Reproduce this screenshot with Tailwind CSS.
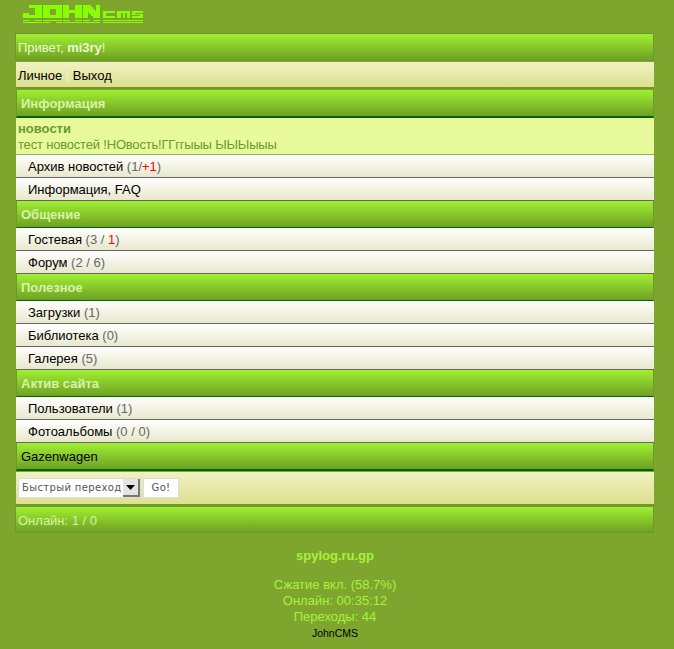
<!DOCTYPE html>
<html><head><meta charset="utf-8"><script src="https://cdn.jsdelivr.net/npm/@tailwindcss/browser@4"></script></head>
<body class="bg-[#7ea52e] font-['Liberation_Sans',Arial,sans-serif] text-[13px] leading-[16px] h-[649px] overflow-hidden">
<div class="pl-[16px] pr-[20px]">
<div class="h-[33px] pl-[7px] pt-[5px]">
<svg width="121" height="19" viewBox="0 0 121 19" fill="#88ff00" shape-rendering="crispEdges">
<path d="M6 0h13v13H0V8h6v2h6V3H6z"/>
<path fill-rule="evenodd" d="M20 0h19v13H20zM27 4v6h6V4z"/>
<path d="M40 0h6v5h6V0h7v13h-7V8h-6v5h-6z"/>
<path d="M60 0h8v2h2v2h2v2h1V0h4v13h-7v-2h-2V9h-2V7h-1v6h-5z"/>
<g>
<rect x="0" y="15" width="7" height="1"/><rect x="11" y="15" width="8" height="1"/><rect x="20" y="15" width="19" height="1"/><rect x="40" y="15" width="7" height="1"/><rect x="52" y="15" width="7" height="1"/><rect x="60" y="15" width="7" height="1"/><rect x="70" y="15" width="7" height="1"/>
<rect x="0" y="17" width="19" height="1"/><rect x="20" y="17" width="7" height="1"/><rect x="33" y="17" width="6" height="1"/><rect x="40" y="17" width="19" height="1"/><rect x="60" y="17" width="17" height="1"/>
</g>
<path fill-rule="evenodd" d="M80 6h12v2h-9v3h9v2H80z"/>
<path d="M94 6h13v7h-3V8h-2v5h-2V8h-2v5h-4z"/>
<path d="M109 6h11v2h-8v1h8v4h-11v-2h8v-1h-8z"/>
<rect x="80" y="15" width="40" height="1"/><rect x="80" y="17" width="40" height="1"/>
</svg>
</div>
<div class="h-[28px] -ml-px border border-[#6f9a2a] bg-gradient-to-b from-[#a0f032] to-[#6fa124] pl-[2px] pt-[6px] text-[#eaf7d0]">Привет, <b>mi3ry</b>!</div>
<div class="h-[27px] mt-[1px] border-b-2 border-[#6f9a2a] bg-gradient-to-b from-[#f1f1c2] to-[#dce08e] pl-[2px] pt-[6px] text-black">Личное <span class="text-[#f0f0d0]">|</span> Выход</div>
<div class="h-[28px] mt-[1px] border-b-2 border-x border-x-[#6f9a2a] border-b-[#006400] bg-gradient-to-b from-[#a0f032] to-[#6fa124] pl-[4px] pt-[6px] font-bold text-[#d9f2a8]">Информация</div>
<div class="h-[37px] border-b border-[#8db35a] bg-[#e7f99b] pl-[2px] pt-[3px] text-[#6b9a2a]"><b>новости</b><br><span class="tracking-[-0.19px]">тест новостей !НОвость!ГГггыыы ЫЫЫыыы</span></div>
<div class="h-[23px] border-b border-[#666] bg-gradient-to-b from-white to-[#e8e8cc] pl-[12px] pt-[4px] text-black">Архив новостей <span class="text-[#666]">(1/<span class="text-[#f00]">+1</span>)</span></div>
<div class="h-[23px] border-b border-[#666] bg-gradient-to-b from-white to-[#e8e8cc] pl-[12px] pt-[4px] text-black">Информация, FAQ</div>
<div class="h-[27px] border-b border-x border-x-[#6f9a2a] border-b-[#006400] bg-gradient-to-b from-[#a0f032] to-[#6fa124] pl-[4px] pt-[6px] font-bold text-[#d9f2a8]">Общение</div>
<div class="h-[23px] border-b border-[#666] bg-gradient-to-b from-white to-[#e8e8cc] pl-[12px] pt-[4px] text-black">Гостевая <span class="text-[#666]">(3 / <span class="text-[#f00]">1</span>)</span></div>
<div class="h-[23px] border-b border-[#666] bg-gradient-to-b from-white to-[#e8e8cc] pl-[12px] pt-[4px] text-black">Форум <span class="text-[#666]">(2 / 6)</span></div>
<div class="h-[27px] border-b border-x border-x-[#6f9a2a] border-b-[#006400] bg-gradient-to-b from-[#a0f032] to-[#6fa124] pl-[4px] pt-[6px] font-bold text-[#d9f2a8]">Полезное</div>
<div class="h-[23px] border-b border-[#666] bg-gradient-to-b from-white to-[#e8e8cc] pl-[12px] pt-[4px] text-black">Загрузки <span class="text-[#666]">(1)</span></div>
<div class="h-[23px] border-b border-[#666] bg-gradient-to-b from-white to-[#e8e8cc] pl-[12px] pt-[4px] text-black">Библиотека <span class="text-[#666]">(0)</span></div>
<div class="h-[23px] border-b border-[#666] bg-gradient-to-b from-white to-[#e8e8cc] pl-[12px] pt-[4px] text-black">Галерея <span class="text-[#666]">(5)</span></div>
<div class="h-[27px] border-b border-x border-x-[#6f9a2a] border-b-[#006400] bg-gradient-to-b from-[#a0f032] to-[#6fa124] pl-[4px] pt-[6px] font-bold text-[#d9f2a8]">Актив сайта</div>
<div class="h-[23px] border-b border-[#666] bg-gradient-to-b from-white to-[#e8e8cc] pl-[12px] pt-[4px] text-black">Пользователи <span class="text-[#666]">(1)</span></div>
<div class="h-[23px] border-b border-[#666] bg-gradient-to-b from-white to-[#e8e8cc] pl-[12px] pt-[4px] text-black">Фотоальбомы <span class="text-[#666]">(0 / 0)</span></div>
<div class="h-[28px] border-b-2 border-x border-x-[#6f9a2a] border-b-[#006400] bg-gradient-to-b from-[#a0f032] to-[#6fa124] pl-[4px] pt-[6px] text-black">Gazenwagen</div>
<div class="h-[34px] mt-[1px] border-b-2 border-[#6f9a2a] bg-gradient-to-b from-[#f1f1c2] to-[#dce08e] pl-[2px] pt-[6px] flex items-start">
<div class="h-[20px] w-[123px] bg-white border border-[#ddd] flex items-center justify-between font-['DejaVu_Sans',sans-serif] text-[10px] tracking-[0.35px] text-[#555] pl-[3px]"><span>Быстрый переход</span><span class="w-[17px] h-[18px] bg-[#e4e4e4] border-r-2 border-b-2 border-[#777] flex items-center justify-center"><svg width="9" height="5" viewBox="0 0 9 5"><path d="M0 0h9L4.500 5z" fill="#000"/></svg></span></div>
<div class="h-[20px] w-[36px] ml-[2px] bg-white border border-[#ddd] flex items-center justify-center font-['DejaVu_Sans',sans-serif] text-[10px] tracking-[0.35px] text-[#555]">Go!</div>
</div>
<div class="h-[27px] -ml-px border border-[#6f9a2a] bg-gradient-to-b from-[#a0f032] to-[#6fa124] pl-[2px] pt-[6px] text-[#d9f2a8]">Онлайн: 1 / 0</div>
</div>
<div class="text-center text-[#a8f23c] mt-[15px] mr-[4px]">
<div class="font-bold">spylog.ru.gp</div>
<div class="mt-[13px]">Сжатие вкл. (58.7%)</div>
<div>Онлайн: 00:35:12</div>
<div>Переходы: 44</div>
<div class="text-[10.5px] text-black">JohnCMS</div>
</div>
</body></html>
